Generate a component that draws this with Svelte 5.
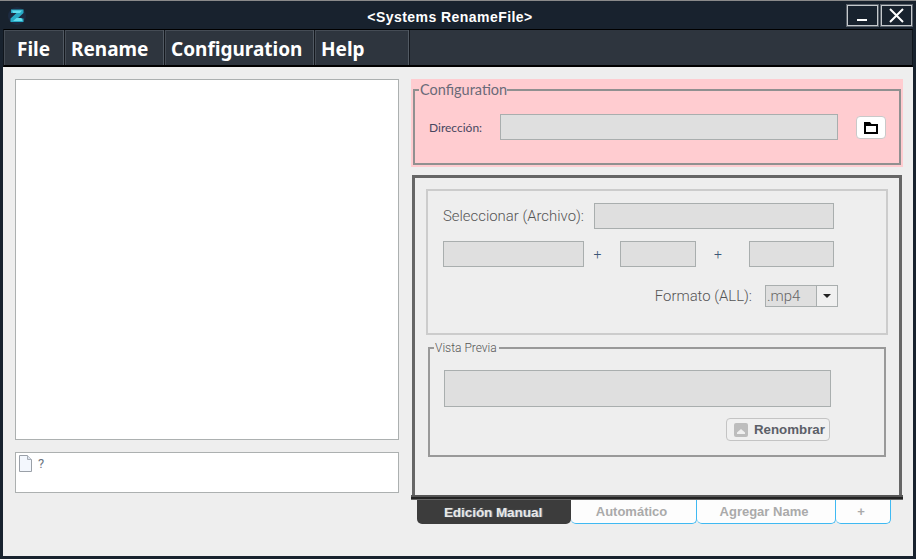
<script lang="ts">
  const menus = ["File", "Rename", "Configuration", "Help"];
  const tabs = ["Edición Manual", "Automático", "Agregar Name", "+"];
  let active = $state(0);
</script>

<div class="window">
  <header class="titlebar">
    <svg class="logo" width="18" height="18" viewBox="0 0 18 18">
      <circle cx="9" cy="9" r="9" fill="#1c2a40" />
      <path d="M3 2.5h12.5v3.5l-6 5.5h6V15H2.5v-3.5l6-5.5H3z" fill="#27a9c4" />
      <path d="M4 3.5h10l-2 2.5H5zM5 14l3.5-3h5l1 3z" fill="#62dcec" />
    </svg>
    <span class="title">&lt;Systems RenameFile&gt;</span>
    <div class="winbtns">
      <button type="button" class="winbtn" aria-label="Minimize">
        <svg width="15" height="15" viewBox="0 0 15 15"><rect x="2" y="11" width="10" height="2" fill="#fff" /></svg>
      </button>
      <button type="button" class="winbtn" aria-label="Close">
        <svg width="15" height="15" viewBox="0 0 15 15"><path d="M1 1l13 13M14 1L1 14" stroke="#fff" stroke-width="2" fill="none" /></svg>
      </button>
    </div>
  </header>

  <nav class="menubar">
    {#each menus as item}
      <button type="button" class="menu">{item}</button>
    {/each}
  </nav>

  <main class="content">
    <div class="left">
      <div class="list"></div>
      <div class="info">
        <svg width="13" height="17" viewBox="0 0 13 17">
          <path d="M.5.5h8l4 4v12h-12z" fill="#f3f7fd" stroke="#9aa0a8" />
          <path d="M8.5.5v4h4" fill="#dde4ee" stroke="#a8aeb6" />
        </svg>
        <span class="question">?</span>
      </div>
    </div>

    <div class="right">
      <div class="pink">
        <fieldset class="config">
          <legend>Configuration</legend>
          <div class="dir-row">
            <span class="dir-label">Dirección:</span>
            <div class="field dir-field"></div>
            <button type="button" class="folder" aria-label="Browse">
              <svg width="14" height="12" viewBox="0 0 14 12">
                <path d="M0 0h6l1.5 2H14v10H0z" fill="#000" />
                <rect x="2" y="4" width="10" height="6" fill="#fff" />
              </svg>
            </button>
          </div>
        </fieldset>
      </div>

      <section class="panel">
        <div class="inputs">
          <div class="row row-select">
            <span class="label">Seleccionar (Archivo):</span>
            <div class="field w240"></div>
          </div>
          <div class="row row-parts">
            <div class="field w141"></div>
            <span class="plus p1">+</span>
            <div class="field w76"></div>
            <span class="plus p2">+</span>
            <div class="field w85"></div>
          </div>
          <div class="row row-format">
            <span class="label">Formato (ALL):</span>
            <div class="combo">
              <span class="combo-value">.mp4</span>
              <span class="combo-arrow"><i></i></span>
            </div>
          </div>
        </div>

        <fieldset class="preview">
          <legend>Vista Previa</legend>
          <div class="field preview-field"></div>
          <button type="button" class="rename">
            <svg width="14" height="14" viewBox="0 0 14 14">
              <rect width="14" height="14" rx="2" fill="#bdbdbd" />
              <path d="M7 6l4 3.5v1.5H3V9.5z" fill="#f0f0f0" />
            </svg>
            Renombrar
          </button>
        </fieldset>
      </section>

      <div class="tabline"></div>
      <div class="tabs">
        {#each tabs as tab, i}
          <button type="button" class="tab t{i}" class:active={active === i} onclick={() => (active = i)}>{tab}</button>
        {/each}
      </div>
    </div>
  </main>
</div>

<style>
  :global(body) {
    margin: 0;
    overflow: hidden;
  }

  .window {
    width: 916px;
    height: 559px;
    box-sizing: border-box;
    display: flex;
    flex-direction: column;
    background: #18222e;
    border-top: 1px solid #8a8a8a;
    padding: 0 3px 3px;
    font-family: "Liberation Sans", sans-serif;
  }

  .titlebar {
    height: 28px;
    flex: none;
    margin: 0 -3px;
    display: flex;
    align-items: center;
    position: relative;
  }

  .logo {
    margin-left: 8px;
    margin-top: 1px;
  }

  .title {
    position: absolute;
    left: 0;
    right: 0;
    top: 7px;
    padding-right: 16px;
    text-align: center;
    font-family: "Liberation Sans", sans-serif;
    font-weight: 700;
    font-size: 14px;
    line-height: 18px;
    letter-spacing: 0.45px;
    color: #fff;
  }

  .winbtns {
    margin-left: auto;
    margin-right: 4px;
    display: flex;
    gap: 3px;
    margin-top: 1px;
  }

  .winbtn {
    width: 31px;
    height: 21px;
    box-sizing: border-box;
    padding: 0;
    display: flex;
    align-items: center;
    justify-content: center;
    background: #18222e;
    border: 1px solid #c4c8cc;
    box-shadow: 0 0 0 1px #5a626b;
  }

  .menubar {
    height: 38px;
    flex: none;
    box-sizing: border-box;
    display: flex;
    gap: 0;
    background: #2e353e;
    border-top: 1px solid #000;
    border-bottom: 2px solid #000;
    border-left: 1px solid #10161d;
    border-right: 1px solid #10161d;
  }

  .menu {
    box-sizing: border-box;
    height: 100%;
    padding: 2px 0 0 13px;
    text-align: left;
    background: #2e353e;
    border: 0;
    border-right: 1px solid #14181e;
    box-shadow: inset -1px 0 0 #525a63, inset 1px 1px 0 #454c55;
    color: #fff;
    font-family: "Noto Sans", sans-serif;
    font-weight: 700;
    font-size: 19px;
    line-height: 24px;
  }

  .menu:nth-child(1) { width: 61px; }
  .menu:nth-child(2) { width: 100px; padding-left: 6px; }
  .menu:nth-child(3) { width: 150px; padding-left: 6px; }
  .menu:nth-child(4) { width: 95px; padding-left: 6px; }

  .content {
    flex: 1;
    display: flex;
    background: #eeeeee;
  }

  .left {
    width: 384px;
    margin: 12px 0 0 12px;
    display: flex;
    flex-direction: column;
    gap: 12px;
  }

  .list {
    height: 361px;
    box-sizing: border-box;
    background: #fff;
    border: 1px solid #acb0b0;
  }

  .info {
    height: 41px;
    box-sizing: border-box;
    display: flex;
    align-items: flex-start;
    gap: 6px;
    padding: 2px 3px;
    background: #fff;
    border: 1px solid #acb0b0;
  }

  .question {
    font-family: "Roboto", sans-serif;
    font-size: 13px;
    line-height: 18px;
    color: #6a7480;
  }

  .right {
    width: 492px;
    margin: 12px 0 0 12px;
    display: flex;
    flex-direction: column;
  }

  .pink {
    height: 88px;
    box-sizing: border-box;
    padding: 2px 2px;
    background: #ffccd0;
  }

  fieldset {
    margin: 0;
    min-width: 0;
    box-sizing: border-box;
  }

  .config {
    height: 84px;
    padding: 0;
    border: 2px solid #909090;
  }

  .config legend {
    margin-left: 4px;
    padding: 0 0 0 1px;
    font-family: "Lato", sans-serif;
    font-size: 14.5px;
    line-height: 18px;
    color: #6a6a78;
  }

  .dir-row {
    display: flex;
    align-items: center;
    height: 26px;
    margin: 15px 0 0 14px;
  }

  .dir-label {
    width: 71px;
    font-family: "Lato", sans-serif;
    font-size: 12px;
    color: #47475f;
  }

  .field {
    box-sizing: border-box;
    flex: none;
    background: #dfdfdf;
    border: 1px solid #a9aeae;
  }

  .dir-field {
    width: 338px;
    height: 26px;
  }

  .folder {
    width: 30px;
    height: 23px;
    margin-left: 18px;
    margin-top: 1px;
    padding: 0;
    display: flex;
    align-items: center;
    justify-content: center;
    background: #fff;
    border: 1px solid #c9c9c9;
    border-radius: 4px;
  }

  .panel {
    height: 320px;
    box-sizing: border-box;
    flex: none;
    margin: 8px 1px 0 1px;
    padding: 11px 11px 0 11px;
    border: 3px solid #666;
    border-bottom: 0;
  }

  .inputs {
    width: 462px;
    height: 146px;
    box-sizing: border-box;
    padding: 12px 0 0 15px;
    border: 2px solid #cccccc;
  }

  .row {
    display: flex;
    align-items: center;
  }

  .label {
    font-family: "Roboto", sans-serif;
    font-weight: 300;
    font-size: 14.9px;
    color: #555;
  }

  .row-select {
    gap: 10px;
    height: 26px;
  }

  .row-parts {
    height: 26px;
    margin-top: 12px;
  }

  .w240 { width: 240px; height: 26px; }
  .w141 { width: 141px; height: 26px; }
  .w76 { width: 76px; height: 26px; }
  .w85 { width: 85px; height: 26px; }

  .plus {
    text-align: center;
    font-family: "Roboto", sans-serif;
    font-weight: 300;
    font-size: 14px;
    color: #3c5878;
  }

  .p1 { width: 36px; padding-right: 9px; box-sizing: border-box; }
  .p2 { width: 53px; padding-right: 9px; box-sizing: border-box; }

  .row-format {
    justify-content: flex-end;
    gap: 13px;
    margin-top: 18px;
    padding-right: 48px;
    height: 22px;
  }

  .combo {
    width: 73px;
    height: 22px;
    box-sizing: border-box;
    display: flex;
    background: #dfdfdf;
    border: 1px solid #a9aeae;
  }

  .combo-value {
    flex: 1;
    padding-left: 1px;
    font-family: "Roboto", sans-serif;
    font-weight: 300;
    font-size: 14.9px;
    line-height: 20px;
    color: #666;
  }

  .combo-arrow {
    width: 20px;
    display: flex;
    align-items: center;
    justify-content: center;
    background: #f0f0f0;
    border-left: 1px solid #a9aeae;
  }

  .combo-arrow i {
    width: 0;
    height: 0;
    border: 4px solid transparent;
    border-top: 4px solid #222;
    border-bottom: 0;
  }

  .preview {
    position: relative;
    width: 458px;
    height: 116px;
    margin-top: 6px;
    margin-left: 2px;
    padding: 0;
    border: 2px solid #999;
  }

  .preview legend {
    margin-left: 4px;
    padding: 0 2px 0 1px;
    font-family: "Roboto", sans-serif;
    font-weight: 300;
    font-size: 12px;
    line-height: 14px;
    color: #555;
  }

  .preview-field {
    width: 387px;
    height: 37px;
    margin: 15px 0 0 14px;
  }

  .rename {
    width: 104px;
    height: 23px;
    box-sizing: border-box;
    display: flex;
    align-items: center;
    gap: 6px;
    margin: 11px 0 0 296px;
    padding: 0 0 0 7px;
    background: #f0f0f0;
    border: 1px solid #c4c4c4;
    border-radius: 4px;
    font-family: "Liberation Sans", sans-serif;
    font-weight: 700;
    font-size: 13.3px;
    color: #5c6068;
  }

  .tabline {
    height: 5px;
    flex: none;
    background: linear-gradient(#555 0 2px, #222 2px 4px, #666 4px);
  }

  .tabs {
    display: flex;
    margin-left: 6px;
  }

  .tab {
    height: 24px;
    box-sizing: border-box;
    padding: 0 4px 1px 0;
    background: #fdfdfd;
    border: 1px solid #3fb9f2;
    border-top: 0;
    border-left: 0;
    border-radius: 0 0 5px 5px;
    font-family: "Liberation Sans", sans-serif;
    font-weight: 700;
    font-size: 13px;
    color: #aaa;
  }

  .tab.active {
    padding: 1px 2px 0 0;
    background: #3c3c3c;
    border: 0;
    font-size: 13.4px;
    color: #e8e8e8;
    text-shadow: 1px 0 1px #8a8a8a;
  }

  .t0 { width: 154px; }
  .t1 { width: 126px; }
  .t2 { width: 139px; }
  .t3 { width: 55px; }
</style>
